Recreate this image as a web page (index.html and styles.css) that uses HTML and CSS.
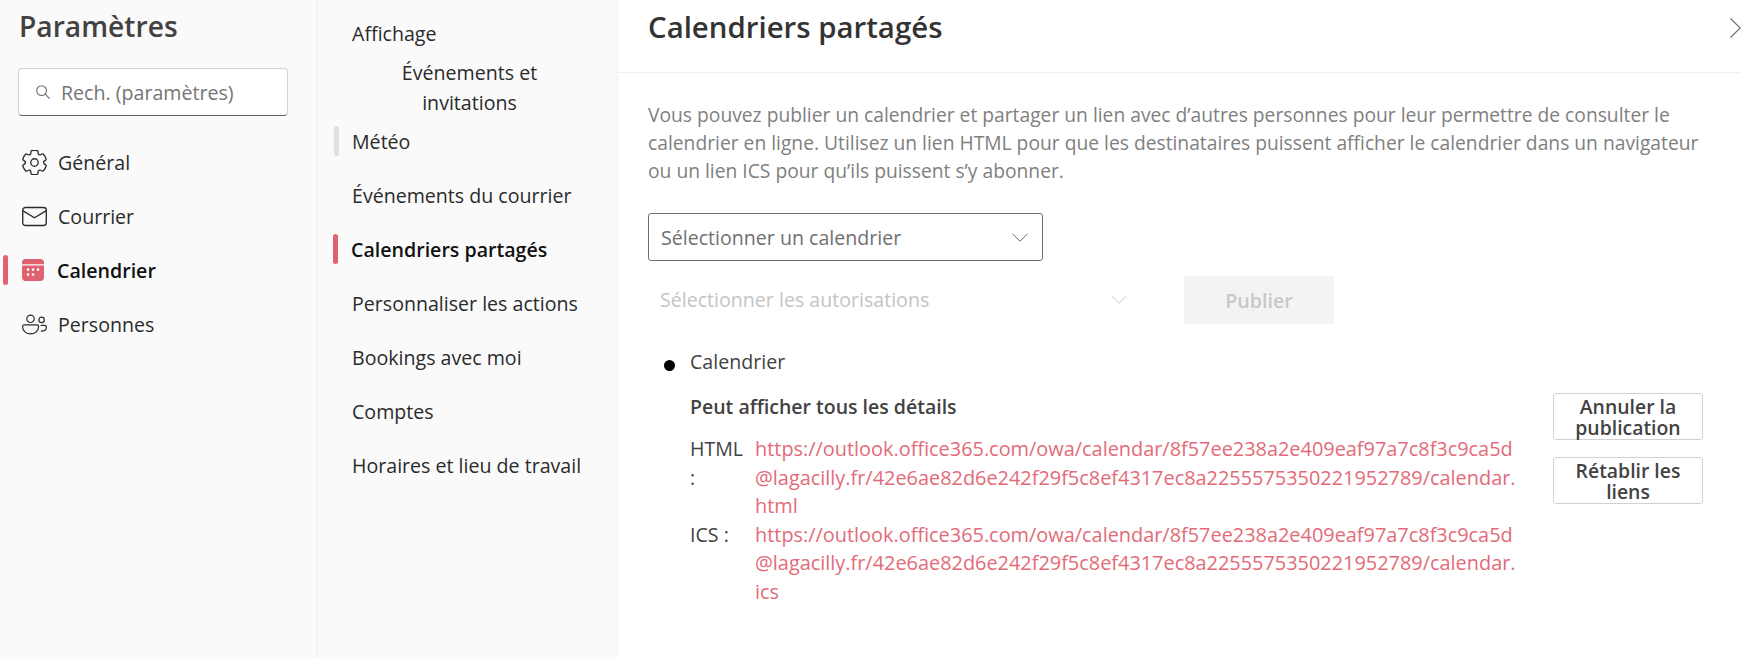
FILE: index.html
```html
<!DOCTYPE html>
<html lang="fr">
<head>
  <meta charset="UTF-8">
  <title>Paramètres</title>
  <link rel="stylesheet" href="styles.css">
</head>
<body>
  <aside class="side">
    <h1 class="side-title">Paramètres</h1>
    <div class="search">
      <svg class="search-icon" viewBox="0 0 16 16" fill="none" stroke="#6b6b6b" stroke-width="1.1"><circle cx="6.6" cy="6.6" r="4.9"/><path d="M10.2 10.2 14.6 14.6"/></svg>
      <span>Rech. (paramètres)</span>
    </div>
    <nav class="side-nav">
      <div class="side-item">
        <svg class="side-icon" viewBox="2 2 20 20" fill="none" stroke="#2b2b2b" stroke-width="1.05"><path d="M12 2.250c.74 0 1.47.1 2.18.25.32.07.55.33.59.65l.17 1.53a1.38 1.38 0 0 0 1.92 1.11l1.4-.61c.3-.13.64-.06.85.17a9.8 9.8 0 0 1 2.2 3.8c.1.3 0 .63-.26.82l-1.25.92a1.38 1.38 0 0 0 0 2.22l1.25.92c.26.19.36.52.27.82a9.8 9.8 0 0 1-2.2 3.8.75.75 0 0 1-.85.17l-1.41-.62a1.38 1.38 0 0 0-1.93 1.12l-.17 1.52a.75.75 0 0 1-.57.65 9.52 9.52 0 0 1-4.41 0 .75.75 0 0 1-.57-.65l-.17-1.52a1.38 1.38 0 0 0-1.93-1.11l-1.4.62a.75.75 0 0 1-.86-.18 9.8 9.8 0 0 1-2.2-3.8.75.75 0 0 1 .27-.82l1.25-.92a1.38 1.38 0 0 0 0-2.22l-1.25-.92a.75.75 0 0 1-.27-.82 9.8 9.8 0 0 1 2.2-3.8c.22-.23.56-.3.85-.17l1.4.62c.83.36 1.79-.2 1.93-1.12l.17-1.53a.75.75 0 0 1 .58-.65c.72-.16 1.45-.24 2.2-.25Z"/><circle cx="12" cy="12" r="3"/></svg>
        <span>Général</span>
      </div>
      <div class="side-item">
        <svg class="side-icon" viewBox="0 0 24 24" fill="none" stroke="#2b2b2b" stroke-width="1.3"><rect x="0.7" y="3.400" width="22.6" height="17.200" rx="2.600"/><path d="M1 6.600 12 13.200 23 6.600"/></svg>
        <span>Courrier</span>
      </div>
      <div class="side-item active">
        <svg class="side-icon cal" viewBox="0 0 22 22"><path fill="#e06170" d="M0 3.400C0 1.500 1.500 0 3.400 0h15.200C20.500 0 22 1.500 22 3.400v1.800H0Z"/><path fill="#e06170" d="M0 6.400h22v12.200c0 1.900-1.500 3.400-3.400 3.400H3.400C1.500 22 0 20.500 0 18.600Z"/><g fill="#fff"><circle cx="6" cy="10.600" r="1.300"/><circle cx="11" cy="10.600" r="1.300"/><circle cx="16" cy="10.600" r="1.300"/><circle cx="6" cy="15.600" r="1.300"/><circle cx="11" cy="15.600" r="1.300"/></g></svg>
        <span>Calendrier</span>
      </div>
      <div class="side-item">
        <svg class="side-icon" viewBox="0 0 25 20" fill="none" stroke="#2b2b2b" stroke-width="1.2"><circle cx="8.500" cy="4.300" r="3.700"/><path d="M2.400 10.400h12.200c1.200 0 2 .8 2 1.800 0 4.100-3.700 7.200-8.100 7.200S.6 16.300.6 12.200c0-1 .7-1.800 1.800-1.800Z"/><circle cx="19.600" cy="5.400" r="2.700"/><path d="M18.600 10.900h3.700c1.200 0 2.100.8 2.100 1.800 0 2.600-2.300 3.900-5.600 3.900"/></svg>
        <span>Personnes</span>
      </div>
    </nav>
  </aside>

  <nav class="sub">
    <div class="sub-item">Affichage</div>
    <div class="sub-wrap">Événements et<br>invitations</div>
    <div class="sub-item hover">Météo</div>
    <div class="sub-item">Événements du courrier</div>
    <div class="sub-item active">Calendriers partagés</div>
    <div class="sub-item">Personnaliser les actions</div>
    <div class="sub-item">Bookings avec moi</div>
    <div class="sub-item">Comptes</div>
    <div class="sub-item">Horaires et lieu de travail</div>
  </nav>

  <main class="main">
    <header class="main-head">
      <h2>Calendriers partagés</h2>
      <svg class="close" viewBox="0 0 11 20" fill="none" stroke="#6f6f6f" stroke-width="1.1"><path d="M.5 .5 10.200 10 .5 19.500"/></svg>
    </header>
    <div class="main-body">
      <p class="intro">Vous pouvez publier un calendrier et partager un lien avec d’autres personnes pour leur permettre de consulter le<br>calendrier en ligne. Utilisez un lien HTML pour que les destinataires puissent afficher le calendrier dans un navigateur<br>ou un lien ICS pour qu’ils puissent s’y abonner.</p>

      <div class="select">
        <span>Sélectionner un calendrier</span>
        <svg class="chev" viewBox="0 0 16 9" fill="none" stroke="#6f6f6f" stroke-width="1"><path d="M.5.800 8 8.200 15.500.800"/></svg>
      </div>

      <div class="perm-row">
        <div class="select disabled">
          <span>Sélectionner les autorisations</span>
          <svg class="chev" viewBox="0 0 16 9" fill="none" stroke="#c8c8c8" stroke-width="1"><path d="M.5.800 8 8.200 15.500.800"/></svg>
        </div>
        <button class="publish" disabled>Publier</button>
      </div>

      <div class="entry">
        <span class="dot"></span>
        <div class="entry-main">
          <div class="entry-name">Calendrier</div>
          <div class="entry-row">
            <div class="entry-links">
              <div class="perm">Peut afficher tous les détails</div>
              <div class="link-row">
                <span class="link-label">HTML :</span>
                <a class="link">https://outlook.office365.com/owa/calendar/8f57ee238a2e409eaf97a7c8f3c9ca5d<br>@lagacilly.fr/42e6ae82d6e242f29f5c8ef4317ec8a2255575350221952789/calendar.<br>html</a>
              </div>
              <div class="link-row">
                <span class="link-label">ICS :</span>
                <a class="link">https://outlook.office365.com/owa/calendar/8f57ee238a2e409eaf97a7c8f3c9ca5d<br>@lagacilly.fr/42e6ae82d6e242f29f5c8ef4317ec8a2255575350221952789/calendar.<br>ics</a>
              </div>
            </div>
            <div class="entry-actions">
              <button class="action">Annuler la publication</button>
              <button class="action">Rétablir les liens</button>
            </div>
          </div>
        </div>
      </div>
    </div>
  </main>
</body>
</html>
```

FILE: styles.css
```css
* {
  box-sizing: border-box;
}

html, body {
  height: 100%;
}

body {
  margin: 0;
  display: flex;
  overflow: hidden;
  background: #fff;
  color: #2b2b2b;
  font-family: "Open Sans", "Noto Sans", sans-serif;
  font-size: 19.6px;
}

/* first column */
.side {
  width: 318px;
  flex: none;
  background: #fafafa;
  border-right: 1px solid #f0f0f0;
  padding: 7px 0 0 0;
}

.side-title {
  margin: 0 0 23px 19px;
  font-size: 28.2px;
  font-weight: 600;
  line-height: 38px;
  color: #424242;
}

.search {
  width: 270px;
  height: 48px;
  margin-left: 18px;
  display: flex;
  align-items: center;
  gap: 10px;
  padding-left: 16px;
  background: #fff;
  border: 1px solid #d1d1d1;
  border-bottom: 1px solid #616161;
  border-radius: 4px;
  color: #757575;
}

.search-icon {
  width: 16px;
  height: 16px;
}

.side-nav {
  margin-top: 19px;
}

.side-item {
  position: relative;
  height: 54px;
  display: flex;
  align-items: center;
  gap: 11px;
  padding-left: 22px;
}

.side-icon {
  width: 25px;
  height: 25px;
  flex: none;
}

.side-icon.cal {
  width: 22px;
  height: 22px;
  margin-right: 3px;
}

.side-item.active {
  gap: 10px;
  font-weight: 600;
  color: #111;
}

.side-item.active::before,
.sub-item.active::before,
.sub-item.hover::before {
  content: "";
  position: absolute;
  top: 12px;
  width: 5px;
  height: 30px;
  border-radius: 3px;
  background: #e06170;
}

.side-item.active::before {
  left: 3px;
}

/* second column */
.sub {
  width: 300px;
  flex: none;
  background: #fafafa;
  border-right: 1px solid #f0f0f0;
  padding: 6px 12px 0 0;
  color: #2b2b2b;
}

.sub-item {
  position: relative;
  height: 54px;
  display: flex;
  align-items: center;
  padding-left: 34px;
}

.sub-wrap {
  margin: -2px 0 -4px;
  line-height: 30px;
  text-align: center;
  padding-left: 16px;
}

.sub-item.active {
  padding-left: 33px;
  font-weight: 600;
  color: #111;
}

.sub-item.active::before {
  left: 15px;
}

.sub-item.hover::before {
  left: 16px;
  background: #e0e0e0;
}

/* main panel */
.main {
  flex: 1;
  min-width: 0;
}

.main-head {
  height: 73px;
  display: flex;
  justify-content: space-between;
  align-items: flex-start;
  padding: 8px 0 0 30px;
  border-bottom: 1px solid #f0f0f0;
}

.main-head h2 {
  margin: 0;
  font-size: 29.4px;
  font-weight: 600;
  line-height: 38px;
  color: #333;
}

.close {
  width: 11px;
  height: 20px;
  margin-top: 10px;
}

.main-body {
  padding: 28px 30px 0 30px;
}

.intro {
  margin: 0 0 28px;
  font-size: 19.25px;
  line-height: 28px;
  color: #808080;
}

.select {
  width: 395px;
  height: 48px;
  display: flex;
  align-items: center;
  justify-content: space-between;
  padding: 0 12px;
  border: 1px solid #6f6f6f;
  border-radius: 3px;
  color: #707070;
}

.chev {
  width: 16px;
  height: 9px;
  margin-right: 2px;
}

.perm-row {
  display: flex;
  align-items: center;
  gap: 43px;
  margin-top: 15px;
}

.select.disabled {
  width: 493px;
  padding-bottom: 2px;
  border: none;
  color: #c4c4c4;
}

.publish {
  width: 150px;
  height: 48px;
  border: none;
  border-radius: 3px;
  background: #f3f3f3;
  color: #c8c8c8;
  font: 600 19.6px "Open Sans", "Noto Sans", sans-serif;
}

.entry {
  display: flex;
  margin-top: 24px;
  padding-left: 16px;
}

.dot {
  width: 11px;
  height: 11px;
  margin-top: 12px;
  margin-right: 15px;
  border-radius: 50%;
  background: #000;
  flex: none;
}

.entry-main {
  flex: 1;
}

.entry-name {
  line-height: 28px;
  color: #424242;
}

.entry-row {
  display: flex;
  justify-content: space-between;
  align-items: flex-start;
  padding-right: 8px;
}

.perm {
  margin: 17px 0 14px;
  font-size: 19.5px;
  line-height: 28px;
  font-weight: 600;
  color: #424242;
}

.link-row {
  display: flex;
  line-height: 28.5px;
}

.link-label {
  width: 65px;
  flex: none;
  padding-right: 8px;
  color: #424242;
}

.link {
  font-size: 19.9px;
  color: #e36b78;
  white-space: nowrap;
}

.entry-actions {
  display: flex;
  flex-direction: column;
  gap: 17px;
  margin-top: 17px;
}

.action {
  width: 150px;
  height: 47px;
  padding: 0 8px;
  border: 1px solid #d1d1d1;
  border-radius: 3px;
  background: #fff;
  color: #424242;
  font: 600 19.4px/21px "Open Sans", "Noto Sans", sans-serif;
}
```
